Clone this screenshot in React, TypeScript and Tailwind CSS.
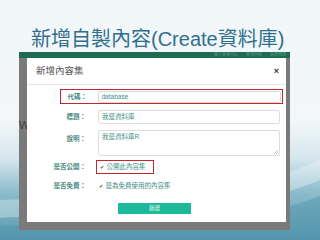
import React from 'react'

const cjk = '"Liberation Sans", "Noto Sans CJK TC", sans-serif'

function Label({ text }: { text: string }) {
  return (
    <span className="flex w-[26px] shrink-0 justify-end whitespace-nowrap text-[6.5px] font-bold text-[#4a8c82]">
      {text}
    </span>
  )
}

function Check({ text }: { text: string }) {
  return (
    <span className="flex items-center gap-[3px] whitespace-nowrap text-[6.5px] text-[#3e8f86]">
      <span className="text-[5px] leading-none text-[#444]">✔</span>
      {text}
    </span>
  )
}

export default function App() {
  return (
    <div className="relative h-[240px] w-[320px] overflow-hidden" style={{ fontFamily: cjk }}>
      {/* slide background */}
      <svg className="absolute inset-0" width="320" height="240" viewBox="0 0 320 240">
        <defs>
          <linearGradient id="bg" x1="0" y1="0" x2="0" y2="1">
            <stop offset="0" stopColor="#f1f6f9" />
            <stop offset="0.5" stopColor="#f3f7f9" />
            <stop offset="0.66" stopColor="#d6e7ee" />
            <stop offset="0.8" stopColor="#8dbccb" />
            <stop offset="1" stopColor="#5699b0" />
          </linearGradient>
        </defs>
        <rect width="320" height="240" fill="url(#bg)" />
        <path d="M0 200 C 80 195, 200 212, 320 160 L 320 180 C 220 222, 90 212, 0 218 Z" fill="#ffffff" opacity="0.3" />
        <path d="M0 226 C 100 222, 220 236, 320 196 L 320 240 L 0 240 Z" fill="#4f93ab" opacity="0.45" />
      </svg>

      <div className="relative">
        <h1 className="pl-[31px] pt-[27px] text-[20px] leading-[24px] font-normal text-[#2f6e8c]">
          新增自製內容(Create資料庫)
        </h1>

        <div className="ml-[19px] mt-[1px] w-[271px]">
          {/* site nav bar */}
          <div className="flex h-[6px] items-center justify-end gap-[8px] bg-[#1e6a55] pr-[4px] text-[4px] leading-none text-[#5f9a88]">
            <span>個人資源中心</span>
            <span>新增內容</span>
            <span>系統管理</span>
          </div>

          {/* modal overlay */}
          <div className="relative bg-[#7a7a7a] pb-[8px] pl-[8px] pr-[4px]">
            <span className="absolute left-[0px] top-[62px] text-[11px] leading-none text-[#3c3c3c]">We</span>

            <div className="relative flex h-[164px] flex-col bg-white">
              <div className="flex h-[27px] items-center justify-between border-b border-[#e6e6e6] pl-[9px] pr-[7px]">
                <span className="text-[9.5px] text-[#555]">新增內容集</span>
                <span className="text-[9px] font-bold leading-none text-[#333]">×</span>
              </div>

              <div className="ml-[33px] mr-[3px] mt-[4px] flex flex-col">
                <div className="flex items-center border-[1.5px] border-[#c1272d] py-[0.5px] pr-[1.5px]">
                  <Label text="代碼：" />
                  <div className="ml-[10.5px] flex h-[12px] flex-1 items-center rounded-[2px] border border-[#d9d9d9] px-[3px] text-[6.5px] text-[#3e8f86]">
                    database
                  </div>
                </div>

                <div className="mt-[6px] flex items-center pr-[3px]">
                  <Label text="標題：" />
                  <div className="ml-[12px] flex h-[14px] flex-1 items-center rounded-[2px] border border-[#dcdcdc] px-[3px] text-[6.5px] text-[#3e8f86]">
                    我是資料庫
                  </div>
                </div>

                <div className="mt-[6px] flex items-start pr-[3px]">
                  <span className="pt-[4px]">
                    <Label text="說明：" />
                  </span>
                  <div className="relative ml-[12px] h-[26px] flex-1 rounded-[2px] border border-[#dcdcdc] px-[3px] pt-[3px] text-[6.5px] leading-none text-[#3e8f86]">
                    我是資料庫R
                    <svg className="absolute bottom-[1px] right-[1px]" width="4" height="4" viewBox="0 0 4 4">
                      <path d="M4 0 L0 4 M4 2 L2 4" stroke="#999" strokeWidth="0.6" />
                    </svg>
                  </div>
                </div>

                <div className="mt-[4px] flex items-center">
                  <Label text="是否公開：" />
                  <div className="ml-[10px] flex h-[14px] w-[58px] items-center border-[1.5px] border-[#c1272d] pl-[2.5px]">
                    <Check text="公開此內容集" />
                  </div>
                </div>

                <div className="mt-[5px] flex h-[14px] items-center">
                  <Label text="是否免費：" />
                  <div className="ml-[12.5px]">
                    <Check text="是為免費使用的內容集" />
                  </div>
                </div>
              </div>

              <div className="mt-[10px] flex justify-center pr-[4px]">
                <button className="flex h-[11px] w-[73px] items-center justify-center bg-[#1cb99a] text-[5.5px] leading-none text-white">
                  新增
                </button>
              </div>
            </div>
          </div>
        </div>
      </div>
    </div>
  )
}
